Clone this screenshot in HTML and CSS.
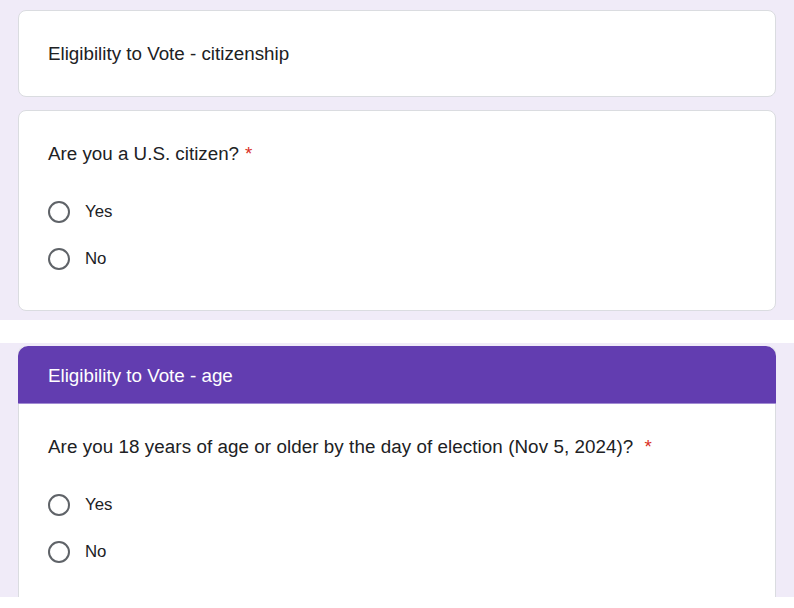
FILE: index.html
```html
<!DOCTYPE html>
<html>
<head>
<meta charset="utf-8">
<link rel="stylesheet" href="styles.css">
</head>
<body>
<section class="band band-top">
  <div class="card title-card">
    <div class="title">Eligibility to Vote - citizenship</div>
  </div>
  <div class="card q-card">
    <div class="question">Are you a U.S. citizen?<span class="req">*</span></div>
    <div class="options">
      <label class="option"><span class="radio"></span><span class="opt-text">Yes</span></label>
      <label class="option"><span class="radio"></span><span class="opt-text">No</span></label>
    </div>
  </div>
</section>
<div class="spacer"></div>
<section class="band band-bottom">
  <div class="card section-card">
    <div class="section-header">Eligibility to Vote - age</div>
    <div class="section-body">
      <div class="question wide">Are you 18 years of age or older by the day of election (Nov 5, 2024)?<span class="req req-wide">*</span></div>
      <div class="options">
        <label class="option"><span class="radio"></span><span class="opt-text">Yes</span></label>
        <label class="option"><span class="radio"></span><span class="opt-text">No</span></label>
      </div>
    </div>
  </div>
</section>
</body>
</html>
```

FILE: styles.css
```css
* { box-sizing: border-box; }
html, body {
  margin: 0;
  padding: 0;
  background: #ffffff;
  font-family: "Liberation Sans", Arial, Helvetica, sans-serif;
  color: #202124;
}
.band {
  background: #f0ebf8;
  padding: 0 18px;
  display: flex;
  flex-direction: column;
}
.band-top {
  height: 320px;
  padding-top: 10px;
  gap: 13px;
}
.spacer { height: 23px; }
.band-bottom {
  height: 254px;
  padding-top: 3px;
  overflow: hidden;
}
.card {
  background: #ffffff;
  border: 1px solid #dadce0;
  border-radius: 8px;
  width: 758px;
  flex: none;
}
.title-card {
  height: 87px;
  display: flex;
  align-items: center;
  padding-left: 29px;
}
.title {
  font-size: 18.8px;
  line-height: 24px;
}
.q-card {
  height: 201px;
  padding: 31px 29px 0;
}
.question {
  font-size: 18.8px;
  line-height: 24px;
  height: 24px;
  white-space: nowrap;
}
.question.wide { letter-spacing: 0.07px; }
.req {
  color: #d93025;
  margin-left: 6px;
}
.req-wide { margin-left: 11px; }
.options {
  margin-top: 28px;
  display: flex;
  flex-direction: column;
  gap: 11px;
}
.option {
  height: 36px;
  display: flex;
  align-items: center;
}
.radio {
  width: 22px;
  height: 22px;
  border: 2px solid #5f6368;
  border-radius: 50%;
  flex: none;
}
.opt-text {
  margin-left: 15px;
  font-size: 16.8px;
}
.section-card {
  border-top: none;
  height: 320px;
}
.section-header {
  background: #623db0;
  color: #ffffff;
  height: 58px;
  margin: 0 -1px;
  border-radius: 10px 10px 0 0;
  border-bottom: 1px solid #a18bd3;
  padding: 2px 0 0 30px;
  display: flex;
  align-items: center;
  font-size: 18.8px;
}
.section-body {
  padding: 31px 29px 0;
}
```
